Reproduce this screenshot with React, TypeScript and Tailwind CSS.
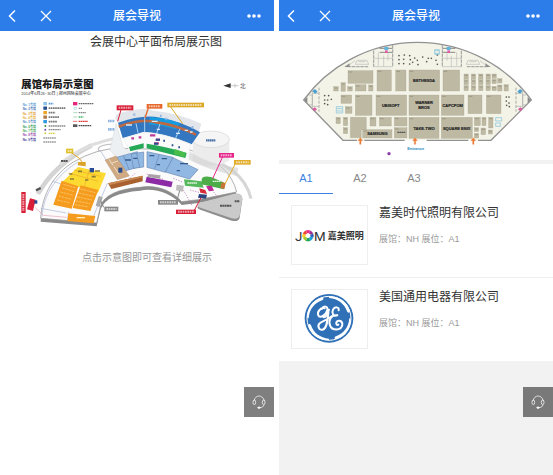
import type { ReactNode } from "react";
import { useState } from "react";

function BackIcon() {
  return (
    <svg viewBox="0 0 8 14" className="h-3.5 w-2" fill="none" stroke="white" strokeWidth="1.5">
      <path d="M7 1.5 1.5 7 7 12.5" />
    </svg>
  );
}

function CloseIcon() {
  return (
    <svg viewBox="0 0 12 12" className="size-3" fill="none" stroke="white" strokeWidth="1.3">
      <path d="M1 1l10 10M11 1 1 11" />
    </svg>
  );
}

function MoreIcon() {
  return (
    <svg viewBox="0 0 16 4" className="h-1 w-4" fill="white">
      <circle cx="3" cy="2" r="1.8" />
      <circle cx="8" cy="2" r="1.8" />
      <circle cx="13" cy="2" r="1.8" />
    </svg>
  );
}

function HeadsetIcon() {
  return (
    <svg viewBox="0 0 42 42" className="size-3.5" fill="none" stroke="white" strokeWidth="2.2">
      <path d="M6 18C8 8 14 3 21 3s14 5 16 15" />
      <ellipse cx="7" cy="22" rx="4" ry="7" />
      <ellipse cx="35" cy="22" rx="4" ry="7" />
      <path d="M36 29c-1 6-6 9-13 9" />
      <ellipse cx="21" cy="38" rx="4" ry="2" fill="white" />
    </svg>
  );
}

function Screen({ children, className }: { children: ReactNode; className: string }) {
  return (
    <section className={`relative min-h-screen min-w-0 flex-1 ${className}`}>
      <header className="grid h-[31px] grid-cols-[1fr_auto_1fr] items-center bg-[#2c7de9] px-2 text-white">
        <div className="flex items-center gap-6">
          <button aria-label="返回"><BackIcon /></button>
          <button aria-label="关闭"><CloseIcon /></button>
        </div>
        <h1 className="text-[12px] leading-5 font-medium">展会导视</h1>
        <button aria-label="更多" className="justify-self-end pr-1"><MoreIcon /></button>
      </header>
      {children}
      <button aria-label="客服" className="absolute right-0 bottom-[58px] grid size-[30px] place-items-center bg-black/50">
        <HeadsetIcon />
      </button>
    </section>
  );
}

const hallColors = ["#5b9bd5", "#4a76b8", "#e3a43a", "#e8b23a", "#5b8fc8", "#3aa05a", "#4fae57", "#9b4fae", "#4a3f9b"];
const facilityColors = ["#8fc3ea", "#264d8c", "#eda52c", "#b07c4a", "#2f9be0"];
const sitePath = "M92 445C96 370 135 310 190 276Q260 235 330 235L540 240Q660 280 680 366L565 389l-50 6c-30-35-80-52-125-43q-100 8-118 55l-12 52z";

function CenterMap() {
  return (
    <svg viewBox="0 54 274 192" className="block w-full" role="img" aria-label="展馆布局示意图">
      <g transform="translate(10 70) scale(0.33333)">
        <text x="34" y="54" fontSize="31" fontWeight="900" fill="#1a1a1a">展馆布局示意图</text>
        <text x="34" y="75" fontSize="12" fontWeight="500" fill="#444">2014年6月26~30日 | 郑州国际会展中心</text>

        {hallColors.map((c, i) => (
          <text key={c} x="38" y={108 + i * 13} fontSize="9" fontWeight="700" fill={c}>No. {i + 1}号馆</text>
        ))}
        {facilityColors.map((c, i) => (
          <g key={c}>
            <rect x="100" y={96 + i * 13.5} width="11" height="10" rx="1" fill={c} />
            <path d={`M116 ${101 + i * 13.5}h${[14, 50, 20, 32, 26][i]}`} stroke={i === 0 ? "#5b9bd5" : "#777"} strokeWidth="5" strokeDasharray="5 1.5" />
          </g>
        ))}
        <g strokeWidth="4" strokeDasharray="5 1.5" stroke="#888">
          <path d="M116 168h50M116 179h36" />
          <path d="M116 190h20" stroke="#d9cf4a" />
          <path d="M100 204h38M100 216h38" stroke="#999" />
          <path d="M206 101h45" stroke="#666" />
          <path d="M206 115h10M206 128h22" />
          <path d="M206 141h14" stroke="#3cb464" />
          <path d="M206 154h28" stroke="#d33" />
          <path d="M206 167h38" stroke="#444" />
        </g>
        <circle cx="106" cy="168" r="3" fill="#3a8f4a" />
        <circle cx="106" cy="179" r="3" fill="#6a4fae" />
        <circle cx="106" cy="190" r="3" fill="#d9cf4a" />
        <rect x="189" y="96" width="13" height="10" fill="#e6257c" />
        <rect x="192" y="112" width="8" height="7" fill="none" stroke="#4fb8c8" />
        <path d="M190 128h12M190 141h12" stroke="#7fc09a" strokeWidth="2" />
        <path d="M189 154h13" stroke="#d33" strokeWidth="2" />
        <rect x="189" y="163" width="13" height="8" fill="#555" />

        <path d="M640 47l22-7v14z" fill="#333" />
        <path d="M662 47h24M675 41v12" stroke="#999" strokeWidth="1.5" />
        <text x="690" y="53" fontSize="17" fill="#555">北</text>

        {/* surrounding roads */}
        <path d="M84 372C112 320 170 262 245 226" fill="none" stroke="#d4d4d4" strokeWidth="14" />
        <path d="M150 282C205 235 255 218 330 202" fill="none" stroke="#dedede" strokeWidth="9" />
        <path d="M540 252C640 270 705 310 723 386" fill="none" stroke="#d6d6d6" strokeWidth="9" />
        <path d="M285 250c-25-5-30-20 5-26s45 10 30 20" fill="none" stroke="#c4c4c4" strokeWidth="4" />
        <path d="M78 361l14-7" stroke="#555" strokeWidth="7" />
        <path d="M153 273h20" stroke="#555" strokeWidth="6" strokeDasharray="6 1" />

        {/* site slab */}
        <path d={sitePath} fill="#8a8a8a" transform="translate(0 10)" />
        <path d={sitePath} fill="#fbfbfb" stroke="#8d8d8d" strokeWidth="2" />
        <path d="M96 440C100 370 145 310 205 276M92 415l77 14M176 425l-4 28M292 340l-44 105M126 333l60 20M270 240l50 80" fill="none" stroke="#a9b5d8" strokeWidth="2" />
        <path d="M75 412l25 24 70 6" fill="none" stroke="#e9a0b0" strokeWidth="2" />

        {/* round tower */}
        <path d="M548 208v64q50 32 110 0v-64z" fill="#ececec" />
        <path d="M540 245q55 38 145 48l-4 25q-95-20-145-50z" fill="#d1d1d1" opacity=".6" />
        <ellipse cx="603" cy="208" rx="55" ry="25" fill="#f5f5f5" stroke="#d5d5d5" strokeWidth="2" />
        <path d="M588 211h28" stroke="#4670a6" strokeWidth="7" strokeDasharray="5 1" />

        {/* north building */}
        <path d="M315 145L320 132Q400 108 430 122Q510 130 574 161L565 190L330 165z" fill="#e2e6ea" />
        <path d="M318 160L340 232L358 245L335 280L300 240z" fill="#edf0f2" stroke="#c4cdd5" />
        <path d="M324 158Q400 132 450 143Q520 155 570 187L545 223Q460 187 400 186L338 204z" fill="#3377c1" />
        <path d="M420 142Q460 140 510 160l-12 18q-40-12-82-15z" fill="#169be0" />
        <path d="M326 170Q390 145 440 157Q500 165 558 194" fill="none" stroke="#bd6a42" strokeWidth="8" />
        <path d="M404 134v54M450 162l-10 28M510 176l-15 32M378 160l6 28" stroke="#a9d2ef" strokeWidth="3" />
        <path d="M340 205L400 187Q460 188 542 222L536 260Q450 235 404 230L357 240z" fill="#fafafa" stroke="#d5d9dc" />
        <path d="M357 231L401 220v14l-40 10zM410 221Q475 231 530 249l-4 15Q470 250 410 235z" fill="#25a957" />
        <path d="M494 237l33 11-4 14-32-10z" fill="#49bd4c" />
        <path d="M364 205h8M386 202h8M420 196h16M438 209h12M432 220h15" stroke="#bd3b9a" strokeWidth="7" />
        <path d="M437 209h13M432 221h12M460 212h5M485 226h5M505 232h5" stroke="#294d8d" strokeWidth="6" />
        <path d="M348 165h18M425 154h18M440 178h10M498 190h12M524 181h10M540 186h8" stroke="#dbeafa" strokeWidth="4" />

        {/* south halls */}
        <g fill="#91b8e2" stroke="#6687b3" strokeWidth="2">
          <path d="M320 262l62-17 8 45-50 14z" />
          <path d="M364 252l37-6v45l-31 4z" />
          <path d="M411 245l78 17-23 45-55-15z" />
          <path d="M489 263l75 36-25 28-73-21z" />
          <path d="M448 252l-14 44M380 250l9 43M340 257l18 43" fill="none" />
        </g>
        <path d="M418 257h15M455 266h16M510 281h24M345 270h18M370 265h12M440 284h10M500 302h10" stroke="#36598c" strokeWidth="4" />
        <path d="M285 270l33-12 40 60-36 11z" fill="#cfaa82" stroke="#a8815c" />
        <path d="M297 268l12 18M312 290l14 22M304 280l20-7" stroke="#eddcc6" strokeWidth="3" />
        <rect x="325" y="293" width="12" height="15" fill="#294d8d" />
        <path d="M294 340l104-23v17l-94 23z" fill="#a8612f" />
        <path d="M294 340l104-23v5l-98 23z" fill="#c88751" />
        <path d="M410 320l78 15-4 17-78-15z" fill="#8c2ba5" />
        <path d="M416 312l36 4-3 10-37-5z" fill="#a9a9a9" />
        <path d="M522 328l53 6 6 19-56-6z" fill="#55b95c" />
        <path d="M575 332q-2-16 28-11l42 18-3 19-68-15z" fill="#4bac48" />
        <path d="M532 339h30M608 334h24" stroke="#e3f3e2" strokeWidth="4" strokeDasharray="5 1" />
        <path d="M635 337l12 3-4 17-12-3z" fill="#c97336" />
        <path d="M500 344l22 3-4 18-20-4z" fill="#bdbdbd" />
        <path d="M568 355l18 5 5 12-20-4z" fill="#d62b39" />
        <path d="M588 349l17-2 7 15-15 2z" fill="#bf2897" />
        <path d="M567 372l24 2-3 12-24-3z" fill="#29447e" />
        <path d="M410 312l50 16M490 325l30 12M520 360l26 46M606 360l20 25M540 360l30 8M375 310l-20 20" fill="none" stroke="#b96aa9" strokeWidth="2" strokeDasharray="4 4" />

        {/* west halls */}
        <path d="M204 291l84 19-24 58-108-31z" fill="#fcda32" />
        <path d="M155 332l50 17-20 67-55-12zM212 346l53 14-24 63-53-9z" fill="#f59b1d" />
        <path d="M160 343l39 11M156 354l39 11M151 366l39 10M146 378l39 10M142 390l39 9M211 357l45 11M207 369l44 10M202 381l44 9M198 393l42 8M195 404l40 7" stroke="#fbc05f" strokeWidth="3" strokeDasharray="8 2" />
        <path d="M238 300l-35 118M175 309l90 25M192 300l80 19" stroke="#efaa2d" strokeWidth="2" />
        <path d="M178 312h9M204 304h12M245 320h12M225 330h10M180 327h12M255 303h15" stroke="#8a7d36" strokeWidth="5" />
        <rect x="239" y="294" width="13" height="13" fill="#284a94" />
        <path d="M205 276h22v13l-24-3z" fill="#dba227" />
        <path d="M175 430l81 8-5 22-79-7z" fill="#f59b1d" />
        <path d="M200 443h25" stroke="#fff1c4" strokeWidth="4" />
        <path d="M60 385l17 4-8 34-18-5z" fill="#d71e36" />
        <rect x="73" y="391" width="9" height="10" fill="#29478e" />
        <path d="M266 378l12 4-9 29-12-4z" fill="#aaa" />

        {/* parking */}
        <path d="M567 405l105-30q25-4 25 13l-8 55q-4 14-24 9l-94-33q-15-6-4-14z" fill="#8f8f8f" />
        <path d="M567 399l105-28q25-4 25 13l-8 52q-4 14-24 9l-94-32q-15-6-4-14z" fill="#cacaca" />
        <path d="M630 407h34M674 394h15" stroke="#555" strokeWidth="6" strokeDasharray="6 1" />

        {/* call-outs */}
        <g fill="none" strokeWidth="3">
          <path d="M333 120l-10 34" stroke="#d71e36" />
          <path d="M415 114l-10 30" stroke="#e6682b" strokeWidth="4" />
          <path d="M482 111l36 50" stroke="#dba827" />
          <path d="M639 258l-31 68" stroke="#e6258b" />
          <path d="M675 283l-30 59" stroke="#e2ad28" />
          <path d="M500 395l9-33M281 412l-9-20" stroke="#888" />
          <path d="M553 421l20-38" stroke="#d71e36" />
          <path d="M184 248l23 16 13 17" stroke="#dba827" />
        </g>
        <rect x="320" y="106" width="50" height="15" fill="#d71e36" />
        <rect x="410" y="102" width="47" height="14" fill="#e6682b" />
        <rect x="472" y="98" width="110" height="14" fill="#dba827" />
        <rect x="627" y="249" width="45" height="14" fill="#e6258b" />
        <rect x="672" y="270" width="50" height="14" fill="#e2ad28" />
        <rect x="444" y="390" width="60" height="14" fill="#888" />
        <rect x="498" y="419" width="60" height="13" fill="#d71e36" />
        <rect x="283" y="410" width="42" height="14" fill="#888" />
        <rect x="168" y="236" width="22" height="14" fill="#dfc12f" />
        <rect x="34" y="366" width="13" height="63" fill="#d71e36" />
        <path d="M326 113h38M416 109h35M478 105h98M632 256h34M678 277h38M450 397h48M504 425h48M289 417h31M173 243h12M40 372v51" stroke="white" strokeWidth="6" strokeDasharray="5 2" opacity=".6" />
        <path d="M294 153h20M294 178h20M370 134h6M450 138h6M466 147h6M545 172h6" stroke="#8eb4e1" strokeWidth="8" strokeDasharray="4 1" />
      </g>
    </svg>
  );
}

const booths = [
  [213, 107, 75, 38], [300, 105, 43, 63], [356, 105, 31, 63], [396, 105, 92, 63], [498, 105, 50, 63],
  [170, 155, 14, 13], [192, 143, 13, 26], [212, 155, 14, 13], [235, 149, 32, 19], [275, 150, 13, 18],
  [192, 180, 32, 25], [235, 180, 50, 61], [297, 180, 92, 61], [396, 180, 90, 61], [493, 180, 68, 61],
  [573, 180, 42, 56], [628, 180, 44, 56], [205, 215, 20, 20], [177, 247, 13, 19], [199, 247, 13, 25],
  [199, 278, 13, 18], [279, 247, 18, 26], [307, 247, 36, 26], [352, 247, 38, 26], [257, 284, 88, 25],
  [352, 278, 38, 31], [396, 247, 90, 63], [493, 247, 93, 63], [592, 247, 18, 25], [615, 247, 12, 25],
  [635, 247, 13, 32], [592, 278, 13, 12], [612, 279, 14, 20], [634, 285, 12, 12], [592, 295, 13, 14],
  [561, 117, 13, 15], [561, 134, 13, 15], [561, 152, 13, 15], [583, 117, 13, 15], [583, 134, 13, 15],
  [583, 152, 13, 15], [605, 117, 13, 15], [605, 134, 13, 15], [605, 152, 13, 15], [627, 117, 13, 15],
  [627, 134, 13, 15], [627, 152, 13, 15], [645, 117, 13, 13], [645, 133, 13, 13], [645, 154, 13, 13],
  [662, 131, 13, 13], [662, 150, 13, 18], [681, 149, 13, 19],
];

const dots = [
  [366, 62], [382, 60], [398, 62], [366, 74], [380, 73], [380, 86], [366, 86], [400, 74], [398, 87], [413, 69],
  [407, 82], [421, 76], [423, 89], [437, 66], [449, 80], [454, 70], [463, 70], [477, 76], [481, 60], [481, 88],
  [143, 182], [155, 182], [143, 195], [152, 195], [163, 193], [152, 209], [143, 206],
  [688, 186], [696, 186], [688, 198], [696, 204], [689, 211], [697, 215],
];

const exhibitors: [string, number, number][] = [
  ["BETHESDA", 441, 141], ["UBISOFT", 341, 215], ["WARNER", 441, 208], ["BROS", 441, 223],
  ["CAPCPOM", 527, 215], ["SAMSUNG", 301, 301], ["TAKE-TWO", 441, 285], ["SQUARE ENIX", 539, 285],
];

function Facilities() {
  return (
    <>
      <path d="M213 95h61M290 45v50M290 95h57V30M304 52v40M320 62v33M333 55v22M292 70h54M240 76h30l5 12h-40zM244 80h22M214 92l20-15" fill="none" stroke="#bbb" strokeWidth="2" />
      <path d="M347 31v64M212 95h62M290 48v47M126 158v72" fill="none" stroke="#888" strokeWidth="2" strokeDasharray="9 4" />
      <path d="M308 40h38M308 52h38" stroke="#555" strokeWidth="2" />
      <rect x="322" y="36" width="12" height="9" fill="#63b3df" />
      <rect x="324" y="46" width="8" height="8" fill="#e05aa5" />
      <path d="M106 166v58M96 180h10v30H96M107 175h18M107 214h18" fill="none" stroke="#aaa" strokeWidth="2" />
      <path d="M106 168l8-6 8 8-8 6z" fill="#4b9fd0" />
      <path d="M106 222l7-5 7 6-7 6z" fill="#d95aa0" />
    </>
  );
}

function BoothMap() {
  return (
    <svg viewBox="279 31 274 129" className="block w-full bg-white" role="img" aria-label="展位分布图">
      <g transform="translate(277 35) scale(0.33333)">
        <path d="M80 195A424 424 0 0 1 763 195L642 316H198z" fill="#f3f3e7" />
        <path d="M240 316H198L80 195A424 424 0 0 1 763 195L642 316H603M262 316H383M449 316H574" fill="none" stroke="#929292" strokeWidth="4" />
        <path d="M82 195l9-9v18zM761 195l-9-9v18zM202 96l16-11v11zM641 96l-16-11v11z" fill="#888" />
        <Facilities />
        <g transform="translate(843 0) scale(-1 1)"><Facilities /></g>
        <path d="M220 247h48v37h-15v24h-33z" fill="#bdb9a3" stroke="#aaa68f" />
        {booths.map(([x, y, w, h]) => (
          <g key={`${x}-${y}`}>
            <rect x={x} y={y} width={w} height={h} fill="#bdb9a3" stroke="#aaa68f" />
            <path d={`M${x + 2} ${y + 4}h${Math.min(w - 4, 11)}`} stroke="#8d8a76" strokeWidth="2" />
          </g>
        ))}
        {dots.map(([x, y]) => <circle key={`${x}-${y}`} cx={x} cy={y} r="2.5" fill="#555" />)}
        <g fill="none" stroke="#79bfdd" strokeWidth="2">
          <path d="M178 215h19v19h-19zM180 221h15M180 228h15" />
          <path d="M656 248h18v10h-18zM656 264h14v10h-14zM473 47h14M473 55h14M473 44v14h14V44z" />
        </g>
        {exhibitors.map(([name, x, y]) => (
          <text key={name} x={x} y={y} fontSize="12" fontWeight="700" textAnchor="middle" fill="#252525" stroke="#252525" strokeWidth=".5">{name}</text>
        ))}
        <path d="M361 292h25" stroke="#555" strokeWidth="4" strokeDasharray="5 1" />
        <path d="M248 328v-11h-5l7-9 7 9h-5v11zM412 328v-11h-5l7-9 7 9h-5v11zM587 328v-11h-5l7-9 7 9h-5v11z" fill="#ed7a33" stroke="#ed7a33" />
        <text x="416" y="344" fontSize="12" fontWeight="700" textAnchor="middle" fill="#278abd">Entrance</text>
        <circle cx="336" cy="356" r="5" fill="#8a3ca5" />
      </g>
    </svg>
  );
}

function JomLogo() {
  const colors = ["#e8308a", "#a32d91", "#345eb1", "#16a2d7", "#20a45a", "#a2c932", "#f5cf25", "#ee4434"];
  return (
    <svg viewBox="0 0 225 174" className="size-full" role="img" aria-label="JOM 嘉美照明">
      <text x="9" y="104" fontSize="40" className="font-['Roboto',sans-serif]" fill="#333">J</text>
      {colors.map((c, i) => (
        <path key={c} d="M48 89L41.5 73.3A17 17 0 0 1 54.5 73.3z" fill={c} transform={`rotate(${i * 45} 48 89)`} />
      ))}
      <path d="M48 81l7 4v8l-7 4-7-4v-8z" fill="white" />
      <text x="66" y="104" fontSize="40" className="font-['Roboto',sans-serif]" fill="#333">M</text>
      <text x="107" y="99" fontSize="27" fontWeight="700" fill="#333">嘉美照明</text>
    </svg>
  );
}

function GeLogo() {
  return (
    <svg viewBox="0 0 225 174" className="size-full" role="img" aria-label="GE">
      <circle cx="111" cy="85" r="73" fill="#2f70b7" />
      <circle cx="111" cy="85" r="66" fill="none" stroke="white" strokeWidth="3" />
      <g fill="white">
        {[0, 90, 180, 270].map((angle) => (
          <path key={angle} transform={`rotate(${angle} 111 85)`} d="M46 85C43 55 63 29 87 23c8-2 10 5 3 8C67 39 52 58 50 85z" />
        ))}
      </g>
      <g fill="none" stroke="white" strokeWidth="6" strokeLinecap="round" strokeLinejoin="round">
        <path d="M98 55C87 51 74 65 79 76c5 11 23-1 27-16 3-12-11-14-17-3M111 59c-4 14-9 22-16 23M110 61c-3 22-3 54-18 58-12 3-17-13-8-20 8-7 23-9 34-20" />
        <path d="M140 61c2-11-12-12-17-2-5 11 1 21 13 17M136 76c-20-2-27 15-22 30 6 17 34 17 37-2 1-14-17-16-18-5-1 5 3 7 6 5" />
      </g>
    </svg>
  );
}

const companies = [
  { name: "嘉美时代照明有限公司", logo: <JomLogo /> },
  { name: "美国通用电器有限公司", logo: <GeLogo /> },
];

export default function App() {
  const [tab, setTab] = useState("A1");
  return (
    <main className="flex min-h-screen gap-[5px] bg-white font-['Liberation_Sans','Noto_Sans_CJK_SC',sans-serif]">
      <Screen className="bg-white">
        <h2 className="pl-[38px] text-center text-[12px] leading-[23px] text-[#333]">会展中心平面布局展示图</h2>
        <button className="block w-full" aria-label="查看详细展示"><CenterMap /></button>
        <p className="pl-5 text-center text-[10px] leading-6 text-[#999]">点击示意图即可查看详细展示</p>
      </Screen>

      <Screen className="bg-[#f2f2f2]">
        <BoothMap />
        <div role="tablist" className="mt-1 flex bg-white">
          {["A1", "A2", "A3"].map((name) => (
            <button
              key={name}
              role="tab"
              aria-selected={tab === name}
              onClick={() => setTab(name)}
              className={`h-[30px] w-[54px] border-b text-[11px] ${tab === name ? "border-[#3c82df] text-[#3c82df]" : "border-transparent text-[#888]"}`}
            >
              {name}
            </button>
          ))}
        </div>
        <ul className="divide-y divide-[#eee] bg-white">
          {companies.map(({ name, logo }) => (
            <li key={name} className="flex gap-[11px] px-3 pt-[11px] pb-3">
              <div className="h-[60px] w-[77px] shrink-0 border border-[#eee]">{logo}</div>
              <div className="min-w-0">
                <h3 className="text-[12px] leading-4 text-[#333]">{name}</h3>
                <p className="mt-3 text-[9px] leading-3 text-[#999]">展馆：NH 展位：A1</p>
              </div>
            </li>
          ))}
        </ul>
      </Screen>
    </main>
  );
}
